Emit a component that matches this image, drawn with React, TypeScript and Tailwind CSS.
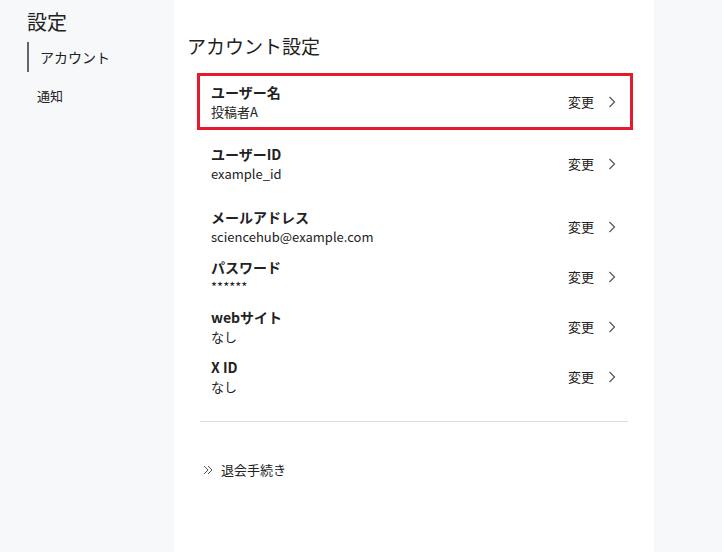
const font = { fontFamily: '"Noto Sans CJK JP", "Noto Sans", sans-serif' }

const rows = [
  { label: 'ユーザーID', value: 'example_id', h: 'h-[63px]' },
  { label: 'メールアドレス', value: 'sciencehub@example.com', h: 'h-[50px]' },
  { label: 'パスワード', value: '******', h: 'h-[50px]' },
  { label: 'webサイト', value: 'なし', h: 'h-[50px]' },
  { label: 'X ID', value: 'なし', h: 'h-[50px]' },
]

function Chevron() {
  return (
    <svg width="8" height="12" viewBox="0 0 8 12" fill="none" stroke="#555" strokeWidth="1.2">
      <path d="M1.5 1 L6.5 6 L1.5 11" />
    </svg>
  )
}

function RowBody({ label, value }: { label: string; value: string }) {
  return (
    <div className="flex items-center justify-between">
      <div>
        <div className="text-[14px] font-bold leading-[19px]">{label}</div>
        <div className="text-[13px] leading-[19px]">{value}</div>
      </div>
      <div className="flex items-center gap-[14px] text-[13px]">
        <span>変更</span>
        <Chevron />
      </div>
    </div>
  )
}

export default function App() {
  return (
    <div className="flex w-[722px] h-[552px] bg-[#f7f8fa] text-[#222]" style={font}>
      <aside className="w-[174px] shrink-0 pl-[27px] pt-[8px]">
        <h1 className="text-[20px] leading-[28px]">設定</h1>
        <div className="mt-[6px] border-l-2 border-[#666] pl-[11px] h-[30px] flex items-center text-[14px]">アカウント</div>
        <div className="mt-[14px] pl-[10px] text-[13px]">通知</div>
      </aside>
      <main className="w-[480px] bg-white pl-[13px] pr-[21px] pt-[32px]">
        <h2 className="text-[19px] leading-[28px]">アカウント設定</h2>
        <div className="mt-[13px] ml-[10px]">
          <div className="border-[3px] border-[#e8192c] h-[57px] pl-[11px] pr-[14px] flex flex-col justify-center">
            <RowBody label="ユーザー名" value="投稿者A" />
          </div>
          {rows.map((r) => (
            <div key={r.label} className={`${r.h} pt-[15px] pl-[14px] pr-[17px]`}>
              <RowBody label={r.label} value={r.value} />
            </div>
          ))}
        </div>
        <div className="mt-[28px] ml-[13px] mr-[5px] border-t border-[#ddd]" />
        <div className="mt-[38px] ml-[16px] flex items-center gap-[8px] text-[13px]">
          <svg width="10" height="10" viewBox="0 0 10 10" fill="none" stroke="#555" strokeWidth="1">
            <path d="M1 1 L5 5 L1 9 M5 1 L9 5 L5 9" />
          </svg>
          <span>退会手続き</span>
        </div>
      </main>
      <div className="flex-1" />
    </div>
  )
}
